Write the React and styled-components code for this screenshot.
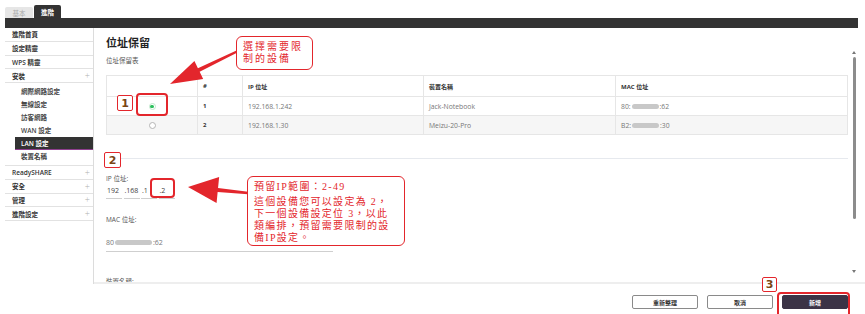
import styled, { createGlobalStyle } from "styled-components";

const UI_FONT = `"Open Sans", "Noto Sans CJK TC", sans-serif`;
const NOTE_FONT = `"Liberation Serif", "Noto Sans CJK TC", serif`;
const RED = "#e3262c";
const BROWN = "#7a4614";

const GlobalStyle = createGlobalStyle`
  html, body { margin: 0; padding: 0; background: #fff; }
  body { font-family: ${UI_FONT}; }
`;

const Page = styled.div`
  position: relative;
  width: 865px;
  height: 314px;
  overflow: hidden;
  background: #fff;
`;

const TabBar = styled.div`
  display: flex;
  align-items: flex-end;
  gap: 1px;
  height: 18px;
  padding-left: 5px;
`;

const Tab = styled.div`
  display: flex;
  align-items: center;
  justify-content: center;
  width: ${(p) => (p.$active ? 27 : 28)}px;
  height: ${(p) => (p.$active ? 13 : 11)}px;
  border-radius: 2px 2px 0 0;
  background: ${(p) => (p.$active ? "#333" : "#e6e6e6")};
  color: ${(p) => (p.$active ? "#fff" : "#aaa")};
  font-size: 6.5px;
  font-weight: ${(p) => (p.$active ? 700 : 400)};
`;

const TopStrip = styled.div`
  height: 10px;
  margin: 0 7px 0 5px;
  background: #333;
`;

const Body = styled.div`
  display: flex;
  height: 256px;
`;

const Sidebar = styled.nav`
  width: 88px;
  margin-left: 5px;
  border-right: 1px solid #dcdcdc;
`;

const NavItem = styled.div`
  box-sizing: border-box;
  display: flex;
  align-items: center;
  justify-content: space-between;
  height: 13.75px;
  padding: 0 3px 0 7px;
  border-bottom: 1px solid #e2e2e2;
  font-size: 6.5px;
  font-weight: 600;
  color: #333;
`;

const Plus = styled.span`
  font-size: 9px;
  font-weight: 300;
  color: #b0b0b0;
`;

const SubList = styled.div`
  padding: 2px 0;
  border-bottom: 1px solid #e2e2e2;
`;

const SubItem = styled.div`
  box-sizing: border-box;
  display: flex;
  align-items: center;
  height: 13px;
  margin-left: 10px;
  padding-left: 6px;
  font-size: 6.5px;
  font-weight: 600;
  color: ${(p) => (p.$active ? "#fff" : "#444")};
  background: ${(p) => (p.$active ? "#333" : "transparent")};
  border-bottom: 1px solid ${(p) => (p.$active ? "#8e3f8e" : "transparent")};
`;

const Main = styled.main`
  flex: 1;
  display: flex;
  min-width: 0;
  box-sizing: border-box;
  border-bottom: 2px solid #eeeeee;
`;

const Scroller = styled.div`
  flex: 1;
  overflow: hidden;
  padding: 8px 2px 0 12px;
`;

const Title = styled.h1`
  margin: 0;
  font-size: 11px;
  line-height: 14px;
  font-weight: 700;
  color: #222;
`;

const Subtitle = styled.div`
  margin-top: 6px;
  font-size: 6.5px;
  line-height: 10px;
  color: #555;
`;

const Table = styled.table`
  margin-top: 9px;
  width: 100%;
  border-collapse: collapse;
  table-layout: fixed;
`;

const Th = styled.th`
  height: 20px;
  padding: 0 0 0 5px;
  border: 1px solid #e6e6e6;
  text-align: left;
  font-size: 6px;
  font-weight: 700;
  color: #333;
`;

const Td = styled.td`
  height: 18px;
  padding: 0 0 0 ${(p) => (p.$center ? 0 : 5)}px;
  border: 1px solid #e6e6e6;
  text-align: ${(p) => (p.$center ? "center" : "left")};
  font-size: ${(p) => (p.$bold ? 6 : 6.8)}px;
  font-weight: ${(p) => (p.$bold ? 700 : 400)};
  color: ${(p) => (p.$bold ? "#333" : "#777")};
`;

const Row = styled.tr`
  background: ${(p) => (p.$alt ? "#f6f6f6" : "#fff")};
`;

const Radio = styled.span`
  display: inline-flex;
  align-items: center;
  justify-content: center;
  width: 7px;
  height: 7px;
  box-sizing: border-box;
  border-radius: 50%;
  border: 1px solid ${(p) => (p.$checked ? "#bfe8cc" : "#b5b5b5")};
  background: #fff;
  vertical-align: middle;

  &::after {
    content: "";
    width: 3.5px;
    height: 3.5px;
    border-radius: 50%;
    background: ${(p) => (p.$checked ? "#2bbf5c" : "transparent")};
  }
`;

const Blur = styled.span`
  display: inline-block;
  width: ${(p) => p.$w}px;
  height: 5px;
  margin: 0 1px;
  border-radius: 3px;
  background: #c8c8c8;
  vertical-align: middle;
`;

const Divider = styled.div`
  margin-top: 23px;
  height: 1px;
  background: #e6e9ee;
`;

const FieldLabel = styled.div`
  margin-top: ${(p) => p.$gap}px;
  font-size: 6.5px;
  line-height: 10px;
  color: #555;
`;

const IpRow = styled.div`
  display: flex;
  gap: 1.5px;
`;

const IpBox = styled.div`
  box-sizing: border-box;
  width: 16px;
  height: 15px;
  padding: 2px 0 0 1px;
  border-bottom: 1px solid #cfcfcf;
  font-size: 7px;
  line-height: 10px;
  color: #444;
`;

const MacBox = styled.div`
  box-sizing: border-box;
  display: flex;
  align-items: center;
  width: 227px;
  height: 19px;
  margin-top: 8px;
  border-bottom: 1px solid #cfcfcf;
  font-size: 7px;
  color: #777;
`;

const ScrollBar = styled.div`
  display: flex;
  flex-direction: column;
  align-items: center;
  width: 8px;
  margin-right: 7px;
`;

const ScrollArrow = styled.div`
  width: 0;
  height: 0;
  margin: ${(p) => (p.$down ? "0 0 9px" : "23px 0 0")};
  border-left: 2px solid transparent;
  border-right: 2px solid transparent;
  ${(p) =>
    p.$down ? "border-top: 3px solid #777;" : "border-bottom: 3px solid #777;"}
`;

const Thumb = styled.div`
  width: 3px;
  height: 162px;
  margin-top: 3px;
  border-radius: 2px;
  background: #8c8c8c;
`;

const Spacer = styled.div`
  flex: 1;
`;

const Footer = styled.footer`
  display: flex;
  justify-content: flex-end;
  gap: 9px;
  padding: 11px 17px 0 0;
`;

const Button = styled.button`
  box-sizing: border-box;
  width: 66px;
  height: 14px;
  padding: 0;
  border: 1px solid ${(p) => (p.$primary ? "#3b3346" : "#8a8a8a")};
  border-radius: 2px;
  background: ${(p) => (p.$primary ? "#3b3346" : "#fff")};
  color: ${(p) => (p.$primary ? "#fff" : "#333")};
  font-family: ${UI_FONT};
  font-size: 6px;
  font-weight: 600;
`;

/* annotation layer drawn over the screenshot */

const Callout = styled.div`
  position: absolute;
  left: ${(p) => p.$x}px;
  top: ${(p) => p.$y}px;
  width: ${(p) => p.$w}px;
  height: ${(p) => p.$h}px;
  box-sizing: border-box;
  padding: ${(p) => p.$pad};
  border: 1px solid ${RED};
  border-radius: 6px;
  background: #fff;
  font-family: ${NOTE_FONT};
  font-size: 10px;
  line-height: 12px;
  letter-spacing: ${(p) => p.$ls}px;
  color: ${RED};
  white-space: nowrap;
`;

const NoteLine = styled.div`
  margin-bottom: ${(p) => p.$gap || 0}px;
`;

const Badge = styled.div`
  position: absolute;
  left: ${(p) => p.$x}px;
  top: ${(p) => p.$y}px;
  width: ${(p) => p.$w}px;
  height: ${(p) => p.$h}px;
  box-sizing: border-box;
  display: flex;
  align-items: center;
  justify-content: center;
  border: 1.5px solid ${RED};
  border-radius: 2px;
  background: #fff;
  font-family: "DejaVu Sans", sans-serif;
  font-size: 11px;
  font-weight: 700;
  color: ${BROWN};
`;

const Highlight = styled.div`
  position: absolute;
  left: ${(p) => p.$x}px;
  top: ${(p) => p.$y}px;
  width: ${(p) => p.$w}px;
  height: ${(p) => p.$h}px;
  box-sizing: border-box;
  border: 2px solid ${RED};
  border-radius: 4px;
`;

const ArrowLayer = styled.svg`
  position: absolute;
  left: 0;
  top: 0;
  pointer-events: none;
`;

const arrowPoints = (tx, ty, hx, hy, tailW, shaftW, headLen, headW) => {
  const len = Math.hypot(hx - tx, hy - ty);
  const ux = (hx - tx) / len;
  const uy = (hy - ty) / len;
  const nx = -uy;
  const ny = ux;
  const bx = hx - ux * headLen;
  const by = hy - uy * headLen;
  const p = (x, y, w) => `${x + nx * w},${y + ny * w}`;
  return [
    p(tx, ty, tailW / 2),
    p(bx, by, shaftW / 2),
    p(bx, by, headW / 2),
    `${hx},${hy}`,
    p(bx, by, -headW / 2),
    p(bx, by, -shaftW / 2),
    p(tx, ty, -tailW / 2),
  ].join(" ");
};

const sideTop = ["進階首頁", "設定精靈", "WPS 精靈"];
const sideSub = ["網際網路設定", "無線設定", "訪客網路", "WAN 設定", "LAN 設定", "裝置名稱"];
const sideBottom = ["ReadySHARE", "安全", "管理", "進階設定"];

const devices = [
  { n: 1, ip: "192.168.1.242", name: "Jack-Notebook", mac: ["80:", ":62"], checked: true },
  { n: 2, ip: "192.168.1.30", name: "Meizu-20-Pro", mac: ["B2:", ":30"], checked: false },
];

const App = () => {
  return (
    <Page>
      <GlobalStyle />
      <TabBar>
        <Tab>基本</Tab>
        <Tab $active>進階</Tab>
      </TabBar>
      <TopStrip />

      <Body>
        <Sidebar>
          {sideTop.map((item) => (
            <NavItem key={item}>{item}</NavItem>
          ))}
          <NavItem>
            安裝<Plus>+</Plus>
          </NavItem>
          <SubList>
            {sideSub.map((item) => (
              <SubItem key={item} $active={item === "LAN 設定"}>
                {item}
              </SubItem>
            ))}
          </SubList>
          {sideBottom.map((item) => (
            <NavItem key={item}>
              {item}
              <Plus>+</Plus>
            </NavItem>
          ))}
        </Sidebar>

        <Main>
          <Scroller>
            <Title>位址保留</Title>
            <Subtitle>位址保留表</Subtitle>
            <Table>
              <colgroup>
                <col style={{ width: 91 }} />
                <col style={{ width: 45 }} />
                <col style={{ width: 181 }} />
                <col style={{ width: 192 }} />
                <col />
              </colgroup>
              <thead>
                <tr>
                  <Th />
                  <Th>#</Th>
                  <Th>IP 位址</Th>
                  <Th>裝置名稱</Th>
                  <Th>MAC 位址</Th>
                </tr>
              </thead>
              <tbody>
                {devices.map((d, i) => (
                  <Row key={d.n} $alt={i % 2 === 1}>
                    <Td $center>
                      <Radio $checked={d.checked} />
                    </Td>
                    <Td $bold>{d.n}</Td>
                    <Td>{d.ip}</Td>
                    <Td>{d.name}</Td>
                    <Td>
                      {d.mac[0]}
                      <Blur $w={27} />
                      {d.mac[1]}
                    </Td>
                  </Row>
                ))}
              </tbody>
            </Table>

            <Divider />
            <FieldLabel $gap={15}>IP 位址:</FieldLabel>
            <IpRow>
              <IpBox>192</IpBox>
              <IpBox>.168</IpBox>
              <IpBox>.1</IpBox>
              <IpBox>.2</IpBox>
            </IpRow>
            <FieldLabel $gap={16}>MAC 位址:</FieldLabel>
            <MacBox>
              80
              <Blur $w={37} />
              :62
            </MacBox>
            <FieldLabel $gap={25}>裝置名稱:</FieldLabel>
          </Scroller>
          <ScrollBar>
            <ScrollArrow />
            <Thumb />
            <Spacer />
            <ScrollArrow $down />
          </ScrollBar>
        </Main>
      </Body>

      <Footer>
        <Button>重新整理</Button>
        <Button>取消</Button>
        <Button $primary>新增</Button>
      </Footer>

      <ArrowLayer width="865" height="314" viewBox="0 0 865 314">
        <polygon
          fill={RED}
          points={arrowPoints(238, 51, 170, 84, 2, 4, 32, 20)}
        />
        <polygon
          fill={RED}
          points={arrowPoints(248, 193, 188, 187, 2.5, 4, 30, 26)}
        />
      </ArrowLayer>

      <Callout $x={236} $y={36} $w={77} $h={34} $pad="4px 0 0 6px" $ls={2}>
        <NoteLine>選擇需要限</NoteLine>
        <NoteLine>制的設備</NoteLine>
      </Callout>
      <Callout $x={247} $y={176} $w={158} $h={70} $pad="4px 0 0 6px" $ls={1.3}>
        <NoteLine $gap={3}>預留IP範圍：2-49</NoteLine>
        <NoteLine>這個設備您可以設定為 2，</NoteLine>
        <NoteLine>下一個設備設定位 3，以此</NoteLine>
        <NoteLine>類編排，預留需要限制的設</NoteLine>
        <NoteLine>備IP設定。</NoteLine>
      </Callout>

      <Badge $x={117} $y={95} $w={16} $h={16}>1</Badge>
      <Badge $x={104} $y={152} $w={17} $h={16}>2</Badge>
      <Badge $x={762} $y={277} $w={15} $h={15}>3</Badge>

      <Highlight $x={136} $y={93} $w={32} $h={23} />
      <Highlight $x={150} $y={178} $w={25} $h={20} />
      <Highlight $x={777} $y={292} $w={73} $h={26} />
    </Page>
  );
};

export default App;
